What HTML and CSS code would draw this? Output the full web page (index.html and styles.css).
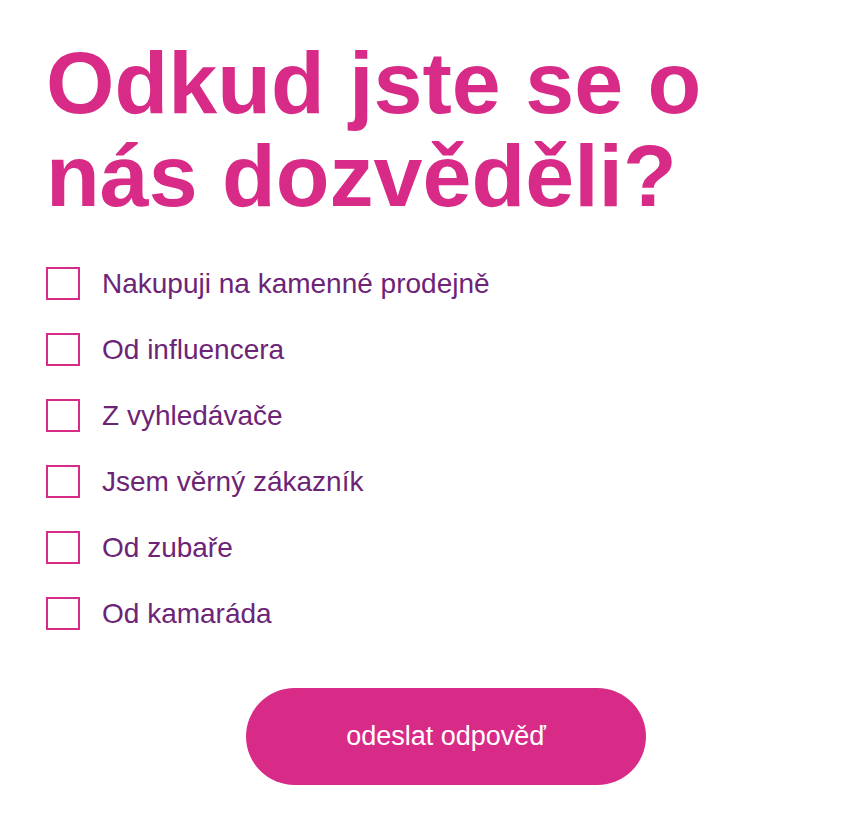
FILE: index.html
```html
<!DOCTYPE html>
<html lang="cs">
<head>
<meta charset="utf-8">
<link rel="stylesheet" href="styles.css">
</head>
<body>
<main class="survey">
  <h1 class="title">Odkud jste se o nás dozvěděli?</h1>
  <ul class="options">
    <li class="option"><span class="box"></span><span class="label">Nakupuji na kamenné prodejně</span></li>
    <li class="option"><span class="box"></span><span class="label">Od influencera</span></li>
    <li class="option"><span class="box"></span><span class="label">Z vyhledávače</span></li>
    <li class="option"><span class="box"></span><span class="label">Jsem věrný zákazník</span></li>
    <li class="option"><span class="box"></span><span class="label">Od zubaře</span></li>
    <li class="option"><span class="box"></span><span class="label">Od kamaráda</span></li>
  </ul>
  <div class="actions">
    <button class="submit" type="button">odeslat odpověď</button>
  </div>
</main>
</body>
</html>
```
FILE: styles.css
```css
html, body {
  margin: 0;
  padding: 0;
  background: #ffffff;
}
body {
  font-family: "Liberation Sans", Arial, sans-serif;
}
.survey {
  padding: 36px 0 0 46px;
  width: 800px;
}
.title {
  margin: 0;
  font-size: 88px;
  line-height: 93px;
  font-weight: 700;
  color: #d82b87;
  width: 700px;
}
.options {
  list-style: none;
  margin: 45px 0 0 0;
  padding: 0;
  display: flex;
  flex-direction: column;
  gap: 33px;
}
.option {
  display: flex;
  align-items: center;
  gap: 22px;
  height: 33px;
}
.box {
  width: 34px;
  height: 33px;
  box-sizing: border-box;
  border: 2px solid #d82b87;
  flex: none;
}
.label {
  font-size: 28px;
  color: #6d2477;
}
.actions {
  display: flex;
  justify-content: center;
  margin-top: 58px;
  width: 800px;
}
.submit {
  width: 400px;
  height: 97px;
  border: none;
  border-radius: 49px;
  background: #d82b87;
  color: #ffffff;
  font-family: "Liberation Sans", Arial, sans-serif;
  font-size: 27px;
  cursor: pointer;
}
```
